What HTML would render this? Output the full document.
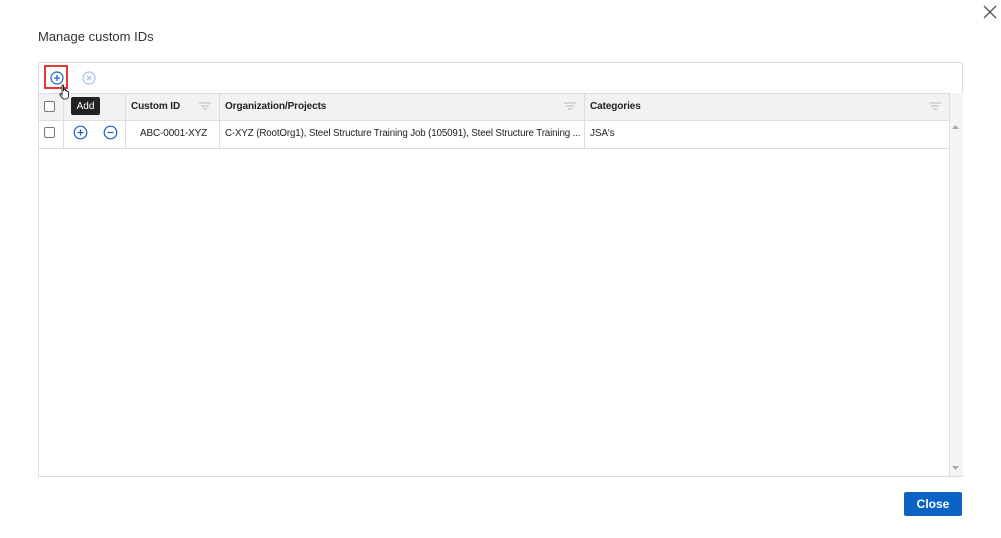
<!DOCTYPE html><html><head><style>
body{margin:0;width:1001px;height:538px;background:#fff;font-family:"Liberation Sans",sans-serif;position:relative;overflow:hidden}
.a{position:absolute}
.t{font-size:10px;color:#222;letter-spacing:-0.15px}
.h{font-size:10px;font-weight:bold;color:#222;letter-spacing:-0.1px}
.cb{position:absolute;width:9px;height:9px;border:1px solid #777;border-radius:2px;background:#fff}
.vl{position:absolute;width:1px;background:#ddd}
.fl{position:absolute;width:12px;height:8px}
</style></head><body>
<div class="a" style="left:38px;top:29px;font-size:13px;color:#333">Manage custom IDs</div>
<svg class="a" style="left:983px;top:5px" width="14" height="14"><path d="M1 1L13 13M13 1L1 13" stroke="#555" stroke-width="1.3"/></svg>
<div class="a" style="left:38px;top:62px;width:923px;height:413px;border:1px solid #ddd"></div>
<div class="a" style="left:39px;top:93px;width:910px;height:26px;background:#f2f2f2;border-top:1px solid #ddd;border-bottom:1px solid #ddd"></div>
<div class="a" style="left:949px;top:93px;width:13px;height:383px;background:#f4f4f4;border-left:1px solid #ddd"></div>
<div class="a" style="left:39px;top:148px;width:910px;height:1px;background:#ddd"></div>
<div class="vl" style="left:63px;top:93px;height:56px"></div>
<div class="vl" style="left:125px;top:93px;height:56px"></div>
<div class="vl" style="left:219px;top:93px;height:56px"></div>
<div class="vl" style="left:584px;top:93px;height:56px"></div>
<div class="a" style="left:44px;top:65px;width:24px;height:24px;border:2px solid #e53935;box-sizing:border-box"></div>
<svg class="a" style="left:50px;top:71px" width="14" height="14"><circle cx="7" cy="7" r="6" fill="none" stroke="#1a5fc9" stroke-width="1.2"/><path d="M7 4V10M4 7H10" stroke="#1a5fc9" stroke-width="1.2"/></svg>
<svg class="a" style="left:82px;top:71px" width="14" height="14"><circle cx="7" cy="7" r="6" fill="none" stroke="#9ec0ee" stroke-width="1.2"/><path d="M5 5L9 9M9 5L5 9" stroke="#9ec0ee" stroke-width="1.2"/></svg>
<div class="cb" style="left:44px;top:101px"></div>
<div class="cb" style="left:44px;top:127px"></div>
<div class="a h" style="left:131px;top:101px">Custom ID</div>
<div class="a h" style="left:225px;top:101px">Organization/Projects</div>
<div class="a h" style="left:590px;top:101px">Categories</div>
<svg class="fl" style="left:199px;top:102px"><path d="M0 1H12M2 4H10M4 7H8" stroke="#bbb"/></svg>
<svg class="fl" style="left:564px;top:102px"><path d="M0 1H12M2 4H10M4 7H8" stroke="#bbb"/></svg>
<svg class="fl" style="left:929px;top:102px"><path d="M0 1H12M2 4H10M4 7H8" stroke="#bbb"/></svg>
<svg class="a" style="left:73px;top:125px" width="15" height="15"><circle cx="7.5" cy="7.5" r="6.3" fill="none" stroke="#1a5fc9" stroke-width="1.2"/><path d="M7.5 4.5V10.5M4.5 7.5H10.5" stroke="#1a5fc9" stroke-width="1.2"/></svg>
<svg class="a" style="left:103px;top:125px" width="15" height="15"><circle cx="7.5" cy="7.5" r="6.3" fill="none" stroke="#1a5fc9" stroke-width="1.2"/><path d="M4.5 7.5H10.5" stroke="#1a5fc9" stroke-width="1.2"/></svg>
<div class="a t" style="left:140px;top:128px">ABC-0001-XYZ</div>
<div class="a t" style="left:225px;top:128px;white-space:nowrap;font-size:9.8px;letter-spacing:-0.15px">C-XYZ (RootOrg1), Steel Structure Training Job (105091), Steel Structure Training ...</div>
<div class="a t" style="left:590px;top:128px">JSA's</div>
<svg class="a" style="left:952px;top:124px" width="7" height="6"><path d="M0 5L3.5 1L7 5Z" fill="#aaa"/></svg>
<svg class="a" style="left:952px;top:465px" width="7" height="6"><path d="M0 1L3.5 5L7 1Z" fill="#aaa"/></svg>
<div class="a" style="left:71px;top:97px;width:29px;height:18px;background:#222;color:#fff;font-size:10px;line-height:20px;text-align:center;border-radius:2px">Add</div>
<svg class="a" style="left:59px;top:84px" width="12" height="16"><path d="M3 1.5C3 .7 4.5 .7 4.5 1.5V7L5 5.5C5 4.8 6.5 4.8 6.5 5.5V7C6.5 6.3 8 6.3 8 7V8C8 7.3 9.5 7.3 9.5 8V12C9.5 13.5 8.5 15 7 15H5C3.5 15 2.5 13 1 11C.5 10 1.5 9.3 2.3 10L3 11Z" fill="#fff" stroke="#000" stroke-width=".8"/></svg>
<div class="a" style="left:904px;top:492px;width:58px;height:24px;background:#0b63c5;color:#fff;font-size:12px;font-weight:bold;line-height:24px;text-align:center;border-radius:2px">Close</div>
</body></html>
